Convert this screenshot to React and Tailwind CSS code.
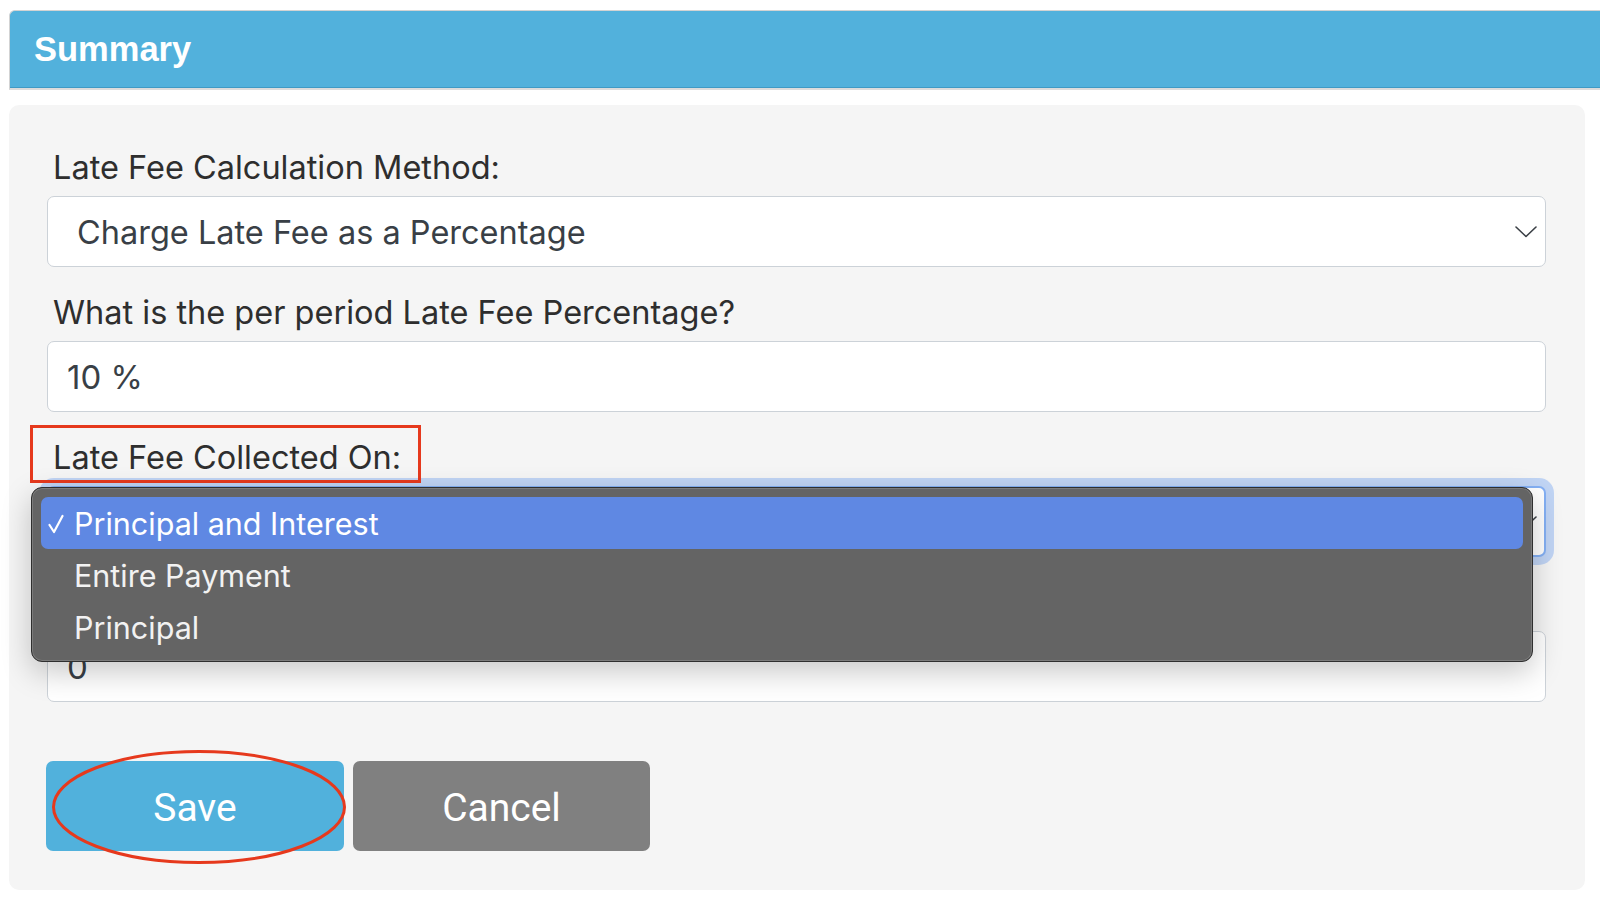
import React from "react";

const Chevron = () => (
  <svg width="22" height="12" viewBox="0 0 22 12" className="shrink-0">
    <polyline points="1,1 11,10.5 21,1" fill="none" stroke="#3a3f45" strokeWidth="1.6" strokeLinecap="round" strokeLinejoin="round" />
  </svg>
);

const Check = () => (
  <svg width="16" height="20" viewBox="0 0 16 20" className="shrink-0">
    <polyline points="1.5,11 6,18 14.5,2" fill="none" stroke="#ffffff" strokeWidth="2.2" strokeLinecap="round" strokeLinejoin="round" />
  </svg>
);

const labelCls = "pl-[6px] h-[42px] leading-[44px] text-[32.5px] text-[#2e2e2e] mb-[8px]";
const font = { fontFamily: "Inter, 'Noto Sans', sans-serif" };

export default function App() {
  return (
    <div className="relative w-full h-[910px] bg-white overflow-hidden" style={font}>
      {/* Header */}
      <div className="ml-[9px] mt-[10px] h-[80px] bg-[#52b1dc] border-t border-l border-[#d3d3d3] border-b-2 border-b-[#dcdcdc] rounded-tl-[6px] shadow-[inset_0_-1px_0_#3f9ac5] flex items-center pl-[24px]">
        <span className="text-white font-bold text-[34.5px]" style={{ fontFamily: "'Liberation Sans', Arial, sans-serif" }}>
          Summary
        </span>
      </div>

      {/* Card */}
      <div className="ml-[9px] mt-[15px] w-[1576px] bg-[#f5f5f5] rounded-[10px] pt-[41px] pl-[38px] pr-[39px] pb-[39px] flex flex-col">
        {/* Group 1 */}
        <div className={labelCls}>Late Fee Calculation Method:</div>
        <div className="h-[71px] bg-white border border-[#ccd2d8] rounded-[7px] flex items-center justify-between pl-[29px] pr-[8px]">
          <span className="text-[32.5px] text-[#393f46] pt-[3px]">Charge Late Fee as a Percentage</span>
          <Chevron />
        </div>

        {/* Group 2 */}
        <div className={labelCls + " mt-[24px]"}>What is the per period Late Fee Percentage?</div>
        <div className="h-[71px] bg-white border border-[#ccd2d8] rounded-[7px] flex items-center pl-[19px]">
          <span className="text-[33px] text-[#393f46] pt-[2px]">10 %</span>
        </div>

        {/* Group 3 */}
        <div className={labelCls + " mt-[24px]"}>Late Fee Collected On:</div>
        <div className="h-[71px] bg-white border-2 border-[#84b0f4] rounded-[7px] shadow-[0_0_0_8px_#c0d4f4] flex items-center justify-end pr-[7px]">
          <Chevron />
        </div>

        {/* Group 4 (label hidden beneath the open menu) */}
        <div className={labelCls + " mt-[24px]"} />
        <div className="h-[71px] bg-white border border-[#ccd2d8] rounded-[7px] flex items-center pl-[19px]">
          <span className="text-[33px] text-[#393f46] pt-[2px]">0</span>
        </div>

        {/* Buttons */}
        <div className="mt-[59px] flex gap-[9px]" style={{ fontFamily: "Roboto, 'Liberation Sans', sans-serif" }}>
          <button className="-ml-[1px] w-[298px] h-[90px] bg-[#51b1dc] rounded-[7px] text-white text-[39px] pt-[5px]">Save</button>
          <button className="w-[297px] h-[90px] bg-[#808080] rounded-[7px] text-white text-[39px] pt-[5px]">Cancel</button>
        </div>
      </div>

      {/* Red annotation box around label */}
      <div className="absolute left-[30px] top-[425px] w-[391px] h-[58px] border-[3px] border-[#e6391d]" />

      {/* Open dropdown menu */}
      <div className="absolute left-[31px] top-[487px] w-[1502px] h-[175px] bg-[#646464] rounded-[11px] border border-[#2f2f2f] shadow-[inset_0_0_0_1px_#7b7b7b,0_10px_30px_rgba(0,0,0,0.22)] pt-[9px] px-[9px] flex flex-col">
        <div className="h-[52px] rounded-[7px] bg-[#5f88e3] flex items-center pl-[7px] pt-[2px]">
          <Check />
          <span className="ml-[10px] text-[30.5px] text-white">Principal and Interest</span>
        </div>
        <div className="h-[52px] flex items-center pl-[33px] pt-[2px]">
          <span className="text-[30.5px] text-[#f2f2f2]">Entire Payment</span>
        </div>
        <div className="h-[52px] flex items-center pl-[33px] pt-[2px]">
          <span className="text-[30.5px] text-[#f2f2f2]">Principal</span>
        </div>
      </div>

      {/* Red ellipse annotation around Save */}
      <svg className="absolute left-[51px] top-[749px]" width="296" height="116" viewBox="0 0 296 116">
        <ellipse cx="148" cy="58" rx="145.5" ry="55.5" fill="none" stroke="#e6391d" strokeWidth="3" />
      </svg>
    </div>
  );
}
